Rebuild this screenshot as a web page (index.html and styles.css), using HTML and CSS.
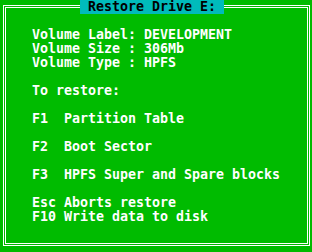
FILE: index.html
```html
<!DOCTYPE html>
<html lang="en">

<head>
    <meta charset="UTF-8">
    <meta name="viewport" content="width=device-width, initial-scale=1.0">
    <title>Restore Drive E:</title>
    <link rel="stylesheet" href="styles.css">
</head>

<body>
    <div class="screen">
        <div class="frame">
            <div class="title">Restore Drive E:</div>

            <!-- Volume details -->
            <div class="group">
                <div class="line">Volume Label: DEVELOPMENT</div>
                <div class="line">Volume Size : 306Mb</div>
                <div class="line">Volume Type : HPFS</div>
            </div>

            <div class="group">
                <div class="line">To restore:</div>
            </div>

            <!-- Restore choices -->
            <div class="options">
                <div class="line"><span class="key">F1</span>Partition Table</div>
                <div class="line"><span class="key">F2</span>Boot Sector</div>
                <div class="line"><span class="key">F3</span>HPFS Super and Spare blocks</div>
            </div>

            <div class="actions">
                <div class="line">Esc Aborts restore</div>
                <div class="line">F10 Write data to disk</div>
            </div>
        </div>
    </div>
</body>

</html>
```

FILE: styles.css
```css
body {
    margin: 0;
    background-color: #00bb00;
    font-family: "DejaVu Sans Mono", "Liberation Mono", monospace;
    font-weight: bold;
    font-size: 13.29px;
    line-height: 14px;
    color: #ffffff;
}

.screen {
    width: 312px;
    height: 252px;
    overflow: hidden;
}

.frame {
    position: relative;
    box-sizing: border-box;
    width: 307px;
    height: 241px;
    margin: 5px 0 0 3px;
    padding: 20px 0 0 26px;
    border: 3px double #ffffff;
}

.title {
    position: absolute;
    top: -8px;
    left: 74px;
    width: 128px;
    height: 14px;
    padding: 0 8px;
    background-color: #00bbbb;
    color: #000000;
    white-space: pre;
}

.line {
    height: 14px;
    white-space: pre;
}

.group {
    margin-bottom: 14px;
}

.options {
    display: flex;
    flex-direction: column;
    gap: 14px;
    margin-bottom: 14px;
}

.key {
    display: inline-block;
    width: 32px;
}
```
